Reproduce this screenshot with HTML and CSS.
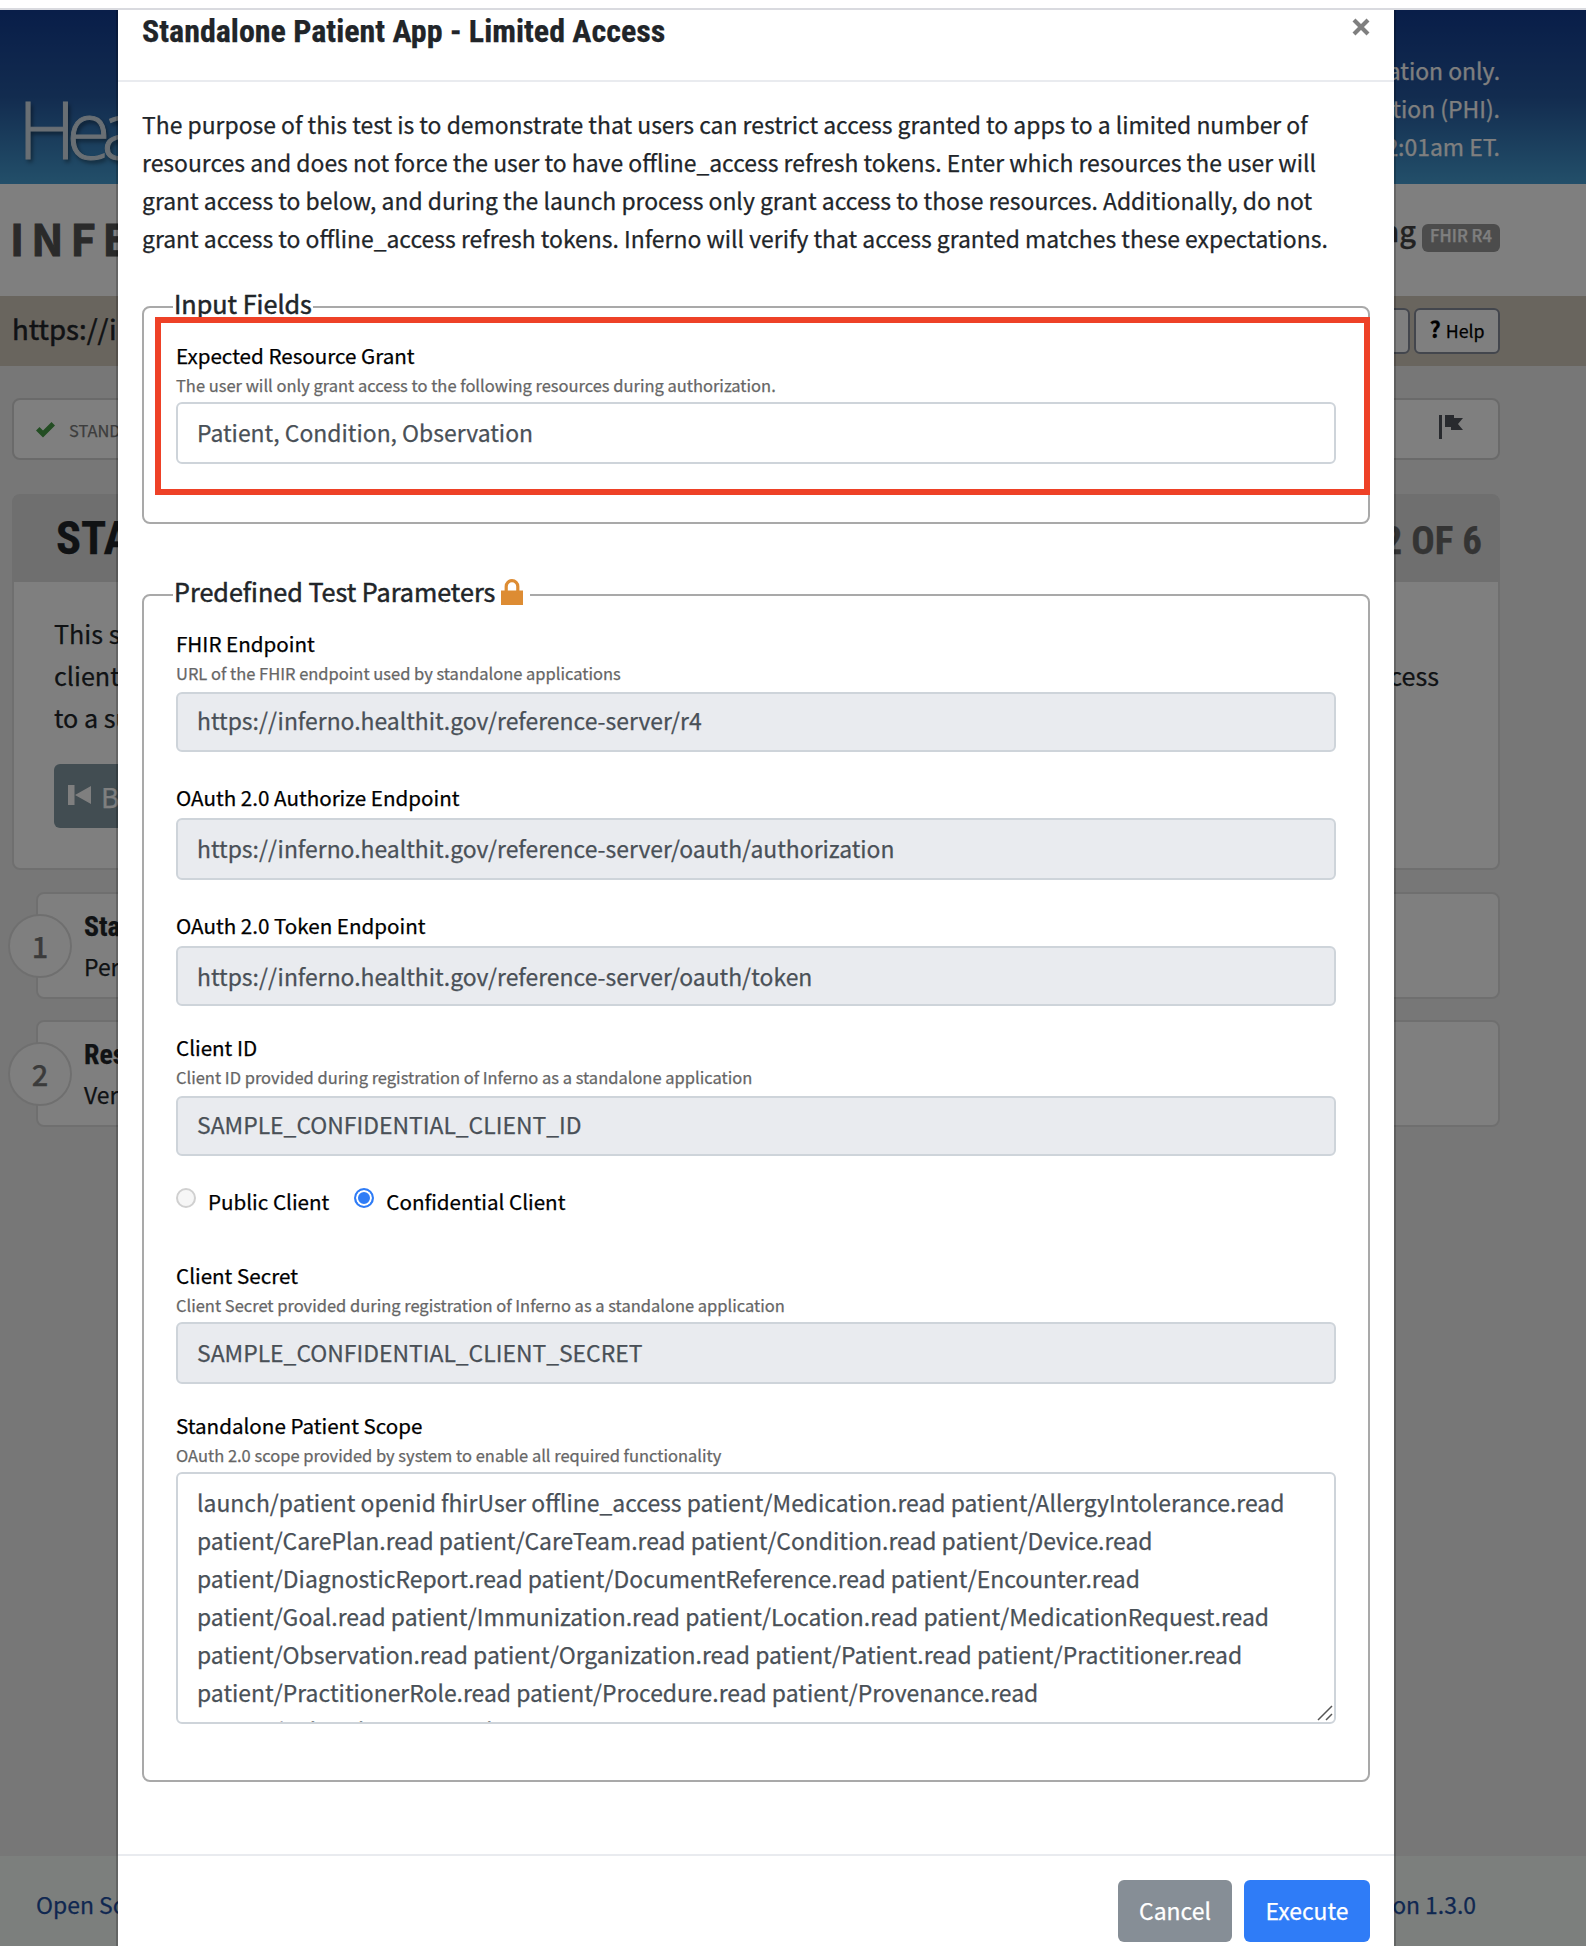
FILE: index.html
```html
<!DOCTYPE html>
<html lang="en">
<head>
<meta charset="utf-8">
<title>Inferno</title>
<link rel="stylesheet" href="styles.css">
</head>
<body>
<div class="chrome-edge"></div>
<div class="page">
  <header class="banner">
    <div class="logo">HealthIT</div>
    <div class="notice">For demonstration only.<br>No Protected Health Information (PHI).<br>Resets daily at 12:01am ET.</div>
  </header>
  <div class="brand">
    <div class="brand-name">INFERNO</div>
    <div class="brand-side"><span class="brand-sub">Program Testing</span><span class="badge">FHIR R4</span></div>
  </div>
  <div class="server-bar">
    <div class="server-url">https://inferno</div>
    <div class="tools"><span class="tool tool-share"></span><span class="tool"><b>?</b>Help</span></div>
  </div>
  <main class="content">
    <nav class="steps">
      <span class="step">
        <svg width="19" height="16" viewBox="0 0 19 16"><path d="M0 8.5 3.5 5 7 8.4 15.5 0 19 3.4 7 15.5z" fill="#469a46"/></svg>
        STANDALONE
      </span>
      <svg class="flag" width="24" height="24" viewBox="0 0 24 24"><path d="M0 0h3v24H0zM6 0h9v3h9l-5 6 5 6H12v-3H6z" fill="#50555c"/></svg>
    </nav>
    <section class="card">
      <div class="card-head"><h2>STANDALONE</h2><div class="card-step">STEP 2 OF 6</div></div>
      <div class="card-body">
        <div class="card-text"><span>This scenario</span><span></span></div>
        <div class="card-text"><span>client access</span><span>access</span></div>
        <div class="card-text"><span>to a subset</span></div>
        <div class="back"><svg width="23" height="20" viewBox="0 0 23 20"><path d="M0 0h6.5v20H0zM7 10 23 1v18z" fill="#fff"/></svg>Back</div>
      </div>
    </section>
    <section class="row row-first"><span class="num">1</span><div><h3>Standalone</h3><p>Perform</p></div></section>
    <section class="row"><span class="num">2</span><div><h3>Restricted</h3><p>Verify</p></div></section>
  </main>
  <footer class="foot"><span>Open Source</span><span>Version 1.3.0</span></footer>
</div>
<div class="backdrop"></div>

<div class="modal">
  <div class="modal-head">
    <h1>Standalone Patient App - Limited Access</h1>
    <svg class="close" width="18" height="18" viewBox="0 0 18 18"><path d="M2 2 16 16M16 2 2 16" stroke="#7f7f7f" stroke-width="4.2"/></svg>
  </div>
  <div class="modal-body">
    <p class="intro">The purpose of this test is to demonstrate that users can restrict access granted to apps to a limited number of<br>resources and does not force the user to have offline_access refresh tokens. Enter which resources the user will<br>grant access to below, and during the launch process only grant access to those resources. Additionally, do not<br>grant access to offline_access refresh tokens. Inferno will verify that access granted matches these expectations.</p>

    <fieldset class="inputs">
      <legend>Input Fields</legend>
      <div class="field">
        <div class="label">Expected Resource Grant</div>
        <div class="help">The user will only grant access to the following resources during authorization.</div>
        <div class="control">Patient, Condition, Observation</div>
      </div>
      <div class="highlight"></div>
    </fieldset>

    <fieldset class="params">
      <legend>Predefined Test Parameters<svg class="lock" width="22" height="26" viewBox="0 0 22 26"><path d="M5.2 12V7.5a5.8 5.8 0 0 1 11.6 0V12" fill="none" stroke="#dd8c33" stroke-width="3.2"/><path d="M0 11.5h22V26H0z" fill="#dd8c33"/></svg></legend>
      <div class="field">
        <div class="label">FHIR Endpoint</div>
        <div class="help loose">URL of the FHIR endpoint used by standalone applications</div>
        <div class="control locked short raised">https://inferno.healthit.gov/reference-server/r4</div>
      </div>
      <div class="field gap-l">
        <div class="label bare">OAuth 2.0 Authorize Endpoint</div>
        <div class="control locked">https://inferno.healthit.gov/reference-server/oauth/authorization</div>
      </div>
      <div class="field gap-l">
        <div class="label bare">OAuth 2.0 Token Endpoint</div>
        <div class="control locked short">https://inferno.healthit.gov/reference-server/oauth/token</div>
      </div>
      <div class="field gap-m">
        <div class="label">Client ID</div>
        <div class="help loose">Client ID provided during registration of Inferno as a standalone application</div>
        <div class="control locked short raised">SAMPLE_CONFIDENTIAL_CLIENT_ID</div>
      </div>
      <div class="radios">
        <span class="radio"></span><span class="radio-label">Public Client</span>
        <span class="radio on"></span><span class="radio-label">Confidential Client</span>
      </div>
      <div class="field gap-xl">
        <div class="label">Client Secret</div>
        <div class="help">Client Secret provided during registration of Inferno as a standalone application</div>
        <div class="control locked">SAMPLE_CONFIDENTIAL_CLIENT_SECRET</div>
      </div>
      <div class="field gap-m">
        <div class="label">Standalone Patient Scope</div>
        <div class="help">OAuth 2.0 scope provided by system to enable all required functionality</div>
        <div class="control area">launch/patient openid fhirUser offline_access patient/Medication.read patient/AllergyIntolerance.read<br>patient/CarePlan.read patient/CareTeam.read patient/Condition.read patient/Device.read<br>patient/DiagnosticReport.read patient/DocumentReference.read patient/Encounter.read<br>patient/Goal.read patient/Immunization.read patient/Location.read patient/MedicationRequest.read<br>patient/Observation.read patient/Organization.read patient/Patient.read patient/Practitioner.read<br>patient/PractitionerRole.read patient/Procedure.read patient/Provenance.read<br>patient/RelatedPerson.read<svg class="grip" width="16" height="16" viewBox="0 0 16 16"><path d="M1 15 15 1M9 15l6-6" stroke="#555" stroke-width="1.5"/></svg></div>
      </div>
    </fieldset>
  </div>
  <div class="modal-foot"><span class="btn cancel">Cancel</span><span class="btn execute">Execute</span></div>
</div>
</body>
</html>
```
FILE: styles.css
```css
* { box-sizing: border-box; }
html, body { height: 1946px; overflow: hidden; }
body {
  margin: 0;
  position: relative;
  background: #fff;
  color: #212529;
  font: 22.92px/38px "Noto Sans CJK SC", sans-serif;
  -webkit-text-stroke: .25px;
  white-space: nowrap;
}
h1, h2, h3, p { margin: 0; }
h1, h2, h3, .card-step { font-family: "Roboto Condensed", Roboto, sans-serif; font-weight: 700; }
svg { display: block; flex: none; }

.chrome-edge { height: 10px; border-bottom: 2px solid #d9dadf; background: #fff; }
.page { height: 1936px; display: flex; flex-direction: column; background: #eee; }
.backdrop { position: absolute; inset: 10px 0 0; background: rgba(0, 0, 0, .5); }

/* Page behind the dialog */
.banner {
  height: 174px;
  padding: 41px 86px 0 18px;
  display: flex;
  justify-content: space-between;
  background: linear-gradient(#123c92, #25589f 50%, #469fd4);
  color: #fff;
}
.logo {
  padding-top: 29px;
  font: 300 80px/96px "Open Sans", sans-serif;
  letter-spacing: -9px;
  -webkit-text-stroke: 1px;
  color: #d2dfe9;
  text-shadow: 2px 3px 4px rgba(0, 0, 0, .5);
}
.notice { text-align: right; }

.brand {
  height: 112px;
  padding: 0 86px 0 9px;
  display: flex;
  justify-content: space-between;
  background: #fff;
}
.brand-name { padding: 23px 0 0 1px; font-size: 43px; line-height: 60px; font-weight: 700; letter-spacing: 7px; color: #555; -webkit-text-stroke: 1px; }
.brand-side { display: flex; align-items: flex-start; gap: 6px; }
.brand-sub { padding-top: 25px; font-size: 29px; line-height: 40px; color: #444; font-weight: 500; }
.badge {
  width: 78px;
  height: 28px;
  margin-top: 40px;
  border-radius: 6px;
  background: #999;
  color: #fff;
  font-size: 16.6px;
  line-height: 22px;
  font-weight: 500;
  text-align: center;
}

.server-bar {
  height: 70px;
  padding: 12px 86px 0 12px;
  display: flex;
  justify-content: space-between;
  background: #d3cbbd;
}
.server-url { font-size: 27.6px; line-height: 40px; -webkit-text-stroke: .5px; }
.tools { display: flex; gap: 4px; }
.tool {
  width: 86px;
  height: 46px;
  border: 2px solid #868c9a;
  border-radius: 6px;
  background: #fff;
  display: flex;
  justify-content: center;
  gap: 5px;
  color: #000;
  font-size: 17.8px;
  line-height: 40px;
}
.tool b { font-size: 22px; line-height: 36px; }

.content { padding: 32px 86px 0 12px; flex: 1; }
.steps {
  height: 62px;
  padding: 15px 35px 0 22px;
  display: flex;
  justify-content: space-between;
  border: 2px solid #d4d4d4;
  border-radius: 8px;
  background: #fff;
}
.step { display: flex; align-items: center; gap: 14px; height: 30px; color: #7a7a7a; font-size: 16.4px; line-height: 29px; }

.card { height: 376px; margin-top: 34px; border: 2px solid #dedede; border-radius: 8px; background: #fff; }
.card-head { height: 86px; padding: 0 16px 0 42px; display: flex; justify-content: space-between; background: #dedede; }
.card-head h2 { font-size: 46.5px; line-height: 85px; color: #212529; }
.card-step { font-size: 39px; line-height: 90px; color: #686868; }
.card-body { padding: 30px 59px 0 40px; }
.card-text { display: flex; justify-content: space-between; font-size: 25.15px; line-height: 42px; }
.back {
  width: 140px;
  height: 64px;
  margin-top: 26px;
  padding-left: 14px;
  display: flex;
  gap: 10px;
  border-radius: 6px;
  background: #849aa4;
  color: #fff;
  font-size: 27.5px;
  line-height: 64px;
}
.back svg { margin-top: 21px; }

.row {
  height: 107px;
  margin: 21px 0 0 24px;
  display: flex;
  gap: 12px;
  border: 2px solid #dfdfdf;
  border-radius: 8px;
  background: #fff;
}
.row-first { margin-top: 22px; }
.num {
  width: 64px;
  height: 64px;
  margin: 20px 0 0 -30px;
  border: 2px solid #dfdfdf;
  border-radius: 50%;
  background: #fff;
  color: #777;
  font-size: 29px;
  line-height: 59px;
  font-weight: 500;
  text-align: center;
}
.row h3 { padding-top: 16px; font-size: 27.8px; line-height: 34px; }
.row p { line-height: 40px; padding-top: 2px; }

.foot {
  height: 90px;
  padding: 29px 110px 0 36px;
  display: flex;
  justify-content: space-between;
  background: #f8fefa;
  color: #1f4fa2;
}

/* Dialog */
.modal {
  position: absolute;
  left: 116px;
  top: 10px;
  width: 1280px;
  height: 1960px;
  border: solid rgba(0, 0, 0, .2);
  border-width: 0 2px;
  background: #fff;
  background-clip: padding-box;
}
.modal-head {
  height: 72px;
  padding: 0 24px 0 24px;
  display: flex;
  justify-content: space-between;
  border-bottom: 2px solid #e9ebef;
}
.modal-head h1 { font-size: 32px; line-height: 43px; }
.close { margin-top: 8px; }
.modal-body { padding: 23px 24px 0; height: 1772px; }
.intro { margin-bottom: 27px; }

fieldset {
  position: relative;
  min-width: 0;
  margin: 0;
  padding: 0 32px;
  border: 2px solid #a9a9a9;
  border-radius: 8px;
}
.inputs { height: 240px; }
.params { height: 1210px; margin-top: 48px; }
legend {
  height: 46px;
  margin-left: -3px;
  padding: 0 1px;
  display: flex;
  font-size: 25.15px;
  line-height: 38px;
  -webkit-text-stroke: .5px;
}
.lock { margin: 7px 6px 0 6px; }
.highlight { position: absolute; left: 11px; right: -2px; top: -13px; height: 178px; border: 6px solid #ee4127; }

.field { margin-top: 10px; }
.gap-m { margin-top: 26px; }
.gap-l { margin-top: 30px; }
.gap-xl { margin-top: 44px; }
.label { margin-bottom: 3px; color: #000; font-size: 20.6px; line-height: 30px; }
.bare { margin-bottom: 6px; }
.help { margin-bottom: 5px; color: #666; font-size: 16.49px; line-height: 24px; }
.loose { margin-bottom: 7px; }
.control {
  height: 62px;
  padding: 0 19px;
  border: 2px solid #ced4da;
  border-radius: 6px;
  color: #495057;
  line-height: 56px;
}
.locked { background: #e9ebef; }
.short { height: 60px; }
.raised { line-height: 52px; }
.area { position: relative; height: 252px; padding-top: 9px; line-height: 38px; overflow: hidden; }
.grip { position: absolute; right: 1px; bottom: 1px; }

.radios { height: 30px; margin-top: 30px; display: flex; font-size: 20.6px; line-height: 30px; color: #000; }
.radio { width: 20px; height: 20px; margin: 2px 12px 0 0; border: 2px solid #d0d0d0; border-radius: 50%; background: #f6f6f6; }
.radio-label + .radio { margin-left: 25px; }
.radio.on { border-color: #2f7cf6; background: #2f7cf6; box-shadow: inset 0 0 0 2px #fff; }

.modal-foot {
  height: 116px;
  padding: 24px 24px 0;
  display: flex;
  justify-content: flex-end;
  gap: 12px;
  border-top: 2px solid #e9ebef;
}
.btn { width: 114px; height: 62px; border-radius: 6px; color: #fff; line-height: 60px; text-align: center; }
.cancel { background: #868e96; }
.execute { width: 126px; background: #2f7cf7; }
```
